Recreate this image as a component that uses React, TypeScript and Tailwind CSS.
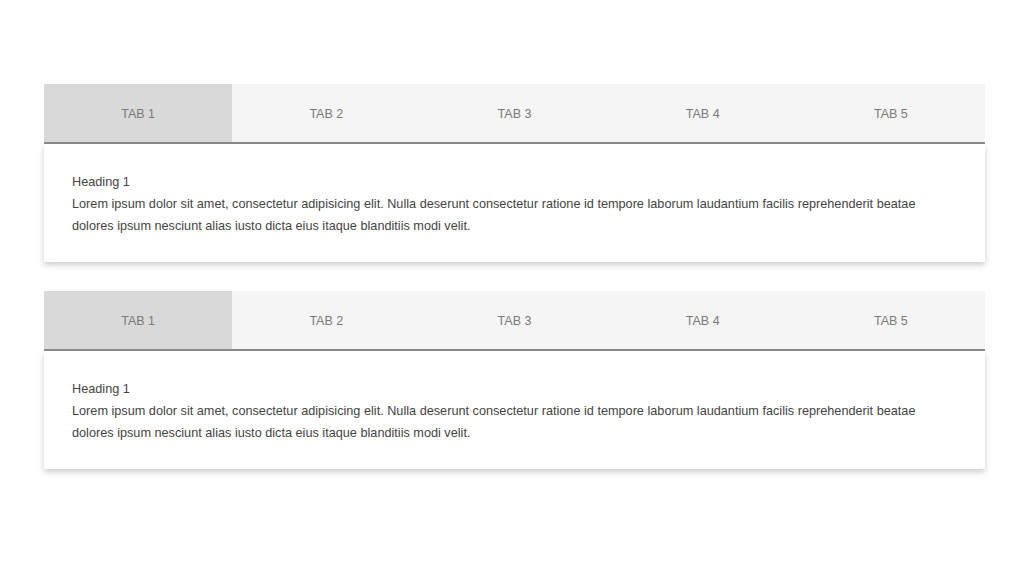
import React, { useState } from "react";

const TABS = ["TAB 1", "TAB 2", "TAB 3", "TAB 4", "TAB 5"];

function TabBlock() {
  const [active, setActive] = useState(0);
  return (
    <div className="w-[941px]">
      <div className="flex h-[60px] bg-[#f5f5f5] border-b-2 border-[#8c8c8c]">
        {TABS.map((t, i) => (
          <button
            key={t}
            onClick={() => setActive(i)}
            className={`flex-1 flex items-center justify-center pt-[3px] text-[12.5px] text-[#7a7a7a] ${
              i === active ? "bg-[#d9d9d9]" : "bg-[#f5f5f5]"
            }`}
          >
            {t}
          </button>
        ))}
      </div>
      <div className="bg-white px-[28px] pt-[27px] pb-[25px] shadow-[0_3px_6px_rgba(0,0,0,0.2)] text-[12.7px] leading-[22px] text-[#444]">
        <div>Heading 1</div>
        <p>
          Lorem ipsum dolor sit amet, consectetur adipisicing elit. Nulla deserunt consectetur ratione id tempore laborum
          laudantium facilis reprehenderit beatae dolores ipsum nesciunt alias iusto dicta eius itaque blanditiis modi
          velit.
        </p>
      </div>
    </div>
  );
}

export default function App() {
  return (
    <div
      className="w-[1024px] h-[583px] bg-white pl-[44px] pt-[84px] flex flex-col gap-[29px]"
      style={{ fontFamily: '"Liberation Sans", Arial, sans-serif' }}
    >
      <TabBlock />
      <TabBlock />
    </div>
  );
}
